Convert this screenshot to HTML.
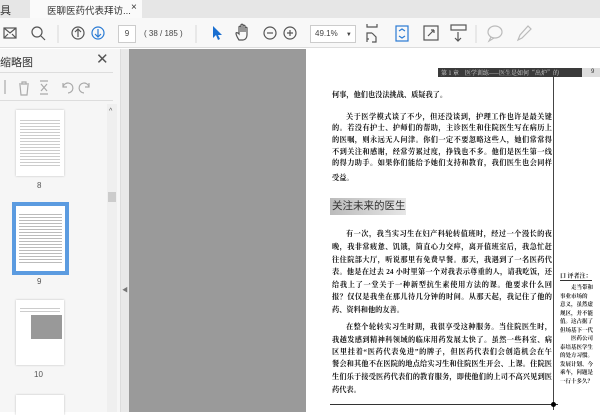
<!DOCTYPE html><html><head><meta charset="utf-8"><style>
*{margin:0;padding:0;box-sizing:border-box}
body{width:600px;height:412px;overflow:hidden;background:#fff;font-family:"Liberation Sans","Noto Sans CJK SC",sans-serif;position:relative}
.a{position:absolute}
.tx{font-family:"Liberation Serif","Noto Serif CJK SC",serif;font-size:7.2px;color:#111;white-space:nowrap;text-align:justify;text-align-last:justify;line-height:10px;font-weight:bold;overflow:hidden}
.sd{font-family:"Noto Serif CJK SC",serif;font-size:5.5px;color:#222;white-space:nowrap;line-height:8.5px;font-weight:bold}
svg{position:absolute}
</style></head><body>
<div class="a" style="left:0;top:0;width:600px;height:18px;background:#e6e6e6"></div>
<div class="a" style="left:0;top:2px;font-size:11px;color:#333">具</div>
<div class="a" style="left:30px;top:0;width:112px;height:19px;background:#fafafa"></div>
<div class="a" style="left:47px;top:3px;font-size:9.5px;color:#333">医聊医药代表拜访...</div>
<div class="a" style="left:131px;top:2px;font-size:10px;color:#333">×</div>
<div class="a" style="left:0;top:18px;width:600px;height:30px;background:#f8f8f8;border-bottom:1px solid #ddd"></div>
<svg style="left:0;top:22px" width="600" height="24" fill="none" stroke="#555" stroke-width="1.2">
<rect x="4" y="6" width="12" height="10"/><path d="M4 6l6 5 6-5M4 16l4-4M16 16l-4-4"/>
<circle cx="37" cy="10" r="5"/><path d="M41 14l4 4"/>
<path d="M58 3v18" stroke="#ddd"/>
<circle cx="78" cy="11" r="6"/><path d="M78 15V7M75 10l3-3 3 3"/>
<circle cx="98" cy="11" r="6" stroke="#2a7bd4"/><path d="M98 7v8M95 12l3 3 3-3" stroke="#2a7bd4"/>
<path d="M196 3v18" stroke="#ddd"/>
<path d="M213 4v12l3-3 2 5 2-1-2-4h4z" fill="#1a6fd0" stroke="none"/>
<path d="M239 18c-2-3-3-5-3-7 1-1 2 0 3 1V5c0-1 2-1 2 0v5V3c0-1 2-1 2 0v7V4c0-1 2-1 2 0v6V6c0-1 2-1 2 0v7c0 3-2 5-4 5z"/>
<circle cx="270" cy="11" r="6"/><path d="M267 11h6"/>
<circle cx="290" cy="11" r="6"/><path d="M287 11h6M290 8v6"/>
<path d="M367 2v3h10V2M367 20v-3h2M372 11h-5v9M372 11l4 4v5h-4" />
<rect x="396" y="4" width="12" height="15" stroke="#2a7bd4"/><path d="M399 9l3-2 3 2M399 14l3 2 3-2" stroke="#2a7bd4"/>
<rect x="424" y="4" width="14" height="14"/><path d="M428 14l6-6M434 8h-3M434 8v3"/>
<rect x="451" y="3" width="15" height="5"/><path d="M458 10v9M455 16l3 3 3-3"/>
<path d="M476 3v18" stroke="#ddd"/>
<ellipse cx="495" cy="10" rx="7" ry="6" stroke="#bbb"/><path d="M491 15l-2 4 5-3" stroke="#bbb"/>
<path d="M518 18l2-5 8-9 3 3-9 9z" stroke="#bbb"/>
</svg>
<div class="a" style="left:118px;top:25px;width:18px;height:18px;background:#fff;border:1px solid #ccc;font-size:8px;color:#444;text-align:center;line-height:16px">9</div>
<div class="a" style="left:144px;top:29px;font-size:8px;color:#444">( 38 / 185 )</div>
<div class="a" style="left:310px;top:25px;width:46px;height:18px;background:#fff;border:1px solid #ccc;font-size:8px;color:#444;line-height:16px;padding-left:4px">49.1% <span style="font-size:6px;margin-left:6px">▼</span></div>
<div class="a" style="left:0;top:49px;width:120px;height:363px;background:#f6f6f6"></div>
<div class="a" style="left:120px;top:49px;width:9px;height:363px;background:#e9e9e9;border-left:1px solid #ddd"></div>
<div class="a" style="left:122px;top:285px;font-size:6px;color:#777">◀</div>
<div class="a" style="left:0;top:54px;font-size:11px;color:#333">缩略图</div>
<div class="a" style="left:96px;top:50px;font-size:15px;color:#555">✕</div>
<div class="a" style="left:0;top:72px;width:113px;height:1px;background:#ddd"></div>
<div class="a" style="left:0;top:100px;width:113px;height:1px;background:#ddd"></div>
<svg style="left:0;top:78px" width="113" height="20" fill="none" stroke="#aaa" stroke-width="1.2">
<path d="M5 2v14"/><path d="M19 6h10M22 6V4h4v2M20 7l1 10h6l1-10"/>
<path d="M40 3h8M40 16h8M41 6l6 7M47 6l-6 7"/>
<path d="M68 15a5 5 0 1 0-5-6M63 5v4h4"/><path d="M84 15a5 5 0 1 1 5-6M89 5v4h-4"/>
</svg>
<div class="a" style="left:107px;top:104px;width:10px;height:308px;background:#efefef"></div>
<div class="a" style="left:108px;top:192px;width:8px;height:10px;background:#ccc"></div>
<div class="a" style="left:109px;top:108px;font-size:7px;color:#555">^</div>
<div class="a" style="left:16px;top:110px;width:48px;height:66px;background:#fff;box-shadow:0 0 2px #bbb"></div>
<div class="a" style="left:20px;top:118px;width:40px;height:50px;background:repeating-linear-gradient(#fff 0 2px,#ccc 2px 3px)"></div>
<div class="a" style="left:37px;top:181px;font-size:8px;color:#555">8</div>
<div class="a" style="left:12px;top:202px;width:57px;height:73px;background:#5b9be0"></div>
<div class="a" style="left:16px;top:206px;width:49px;height:65px;background:#fff"></div>
<div class="a" style="left:19px;top:212px;width:43px;height:52px;background:repeating-linear-gradient(#fff 0 2px,#bbb 2px 3px)"></div>
<div class="a" style="left:37px;top:277px;font-size:8px;color:#555">9</div>
<div class="a" style="left:16px;top:300px;width:48px;height:65px;background:#fff;box-shadow:0 0 2px #bbb"></div>
<div class="a" style="left:31px;top:315px;width:31px;height:24px;background:#999"></div>
<div class="a" style="left:20px;top:306px;width:40px;height:8px;background:repeating-linear-gradient(#fff 0 2px,#ccc 2px 3px)"></div>
<div class="a" style="left:34px;top:370px;font-size:8px;color:#555">10</div>
<div class="a" style="left:16px;top:395px;width:48px;height:20px;background:#fff;box-shadow:0 0 2px #bbb"></div>
<div class="a" style="left:129px;top:49px;width:177px;height:363px;background:#9a9a9a"></div>
<div class="a" style="left:306px;top:49px;width:294px;height:363px;background:#fff"></div>
<div class="a" style="left:438px;top:68px;width:144px;height:9px;background:#3a3a3a;color:#ddd;font-size:6px;line-height:9px;padding-left:3px;font-family:'Noto Serif CJK SC',serif;overflow:hidden;white-space:nowrap">第 1 章　医学训练——医生是如何“出炉”的</div>
<div class="a" style="left:582px;top:68px;width:18px;height:9px;background:#ddd;font-size:6px;color:#333;line-height:9px;padding-left:9px">9</div>
<div class="a" style="left:553px;top:77px;width:1px;height:333px;background:#444"></div>
<div class="a" style="left:330px;top:404px;width:228px;height:1px;background:#333"></div>
<div class="a" style="left:551px;top:402px;width:5px;height:5px;border-radius:50%;background:#000"></div>
<div class="a" style="left:330px;top:198px;width:76px;height:17px;background:linear-gradient(90deg,#bbb,#e6e6e6);font-size:10.5px;color:#333;line-height:17px;padding-left:2px">关注未来的医生</div>
<div class="tx a" style="left:332px;top:90px;text-align-last:left">何事，他们也没法挑战、质疑我了。</div>
<div class="tx a" style="left:346px;top:112px;width:206px">关于医学模式谈了不少，但还没谈到，护理工作也许是最关键</div>
<div class="tx a" style="left:332px;top:123px;width:220px">的。若没有护士、护师们的帮助，主诊医生和住院医生写在病历上</div>
<div class="tx a" style="left:332px;top:135px;width:220px">的医嘱，则永远无人问津。你们一定不要忽略这些人，她们常常得</div>
<div class="tx a" style="left:332px;top:147px;width:220px">不到关注和感谢，经常劳累过度，挣钱也不多。他们是医生第一线</div>
<div class="tx a" style="left:332px;top:158px;width:220px">的得力助手。如果你们能给予她们支持和教育，我们医生也会同样</div>
<div class="tx a" style="left:332px;top:173px;text-align-last:left">受益。</div>
<div class="tx a" style="left:346px;top:229px;width:206px">有一次，我当实习生在妇产科轮转值班时，经过一个漫长的夜</div>
<div class="tx a" style="left:332px;top:242px;width:220px">晚，我非常疲惫、饥饿，简直心力交瘁，离开值班室后，我急忙赶</div>
<div class="tx a" style="left:332px;top:255px;width:220px">往住院部大厅，听说那里有免费早餐。那天，我遇到了一名医药代</div>
<div class="tx a" style="left:332px;top:267px;width:220px">表。他是在过去 24 小时里第一个对我表示尊重的人，请我吃饭，还</div>
<div class="tx a" style="left:332px;top:280px;width:220px">给我上了一堂关于一种新型抗生素使用方法的课。他要求什么回</div>
<div class="tx a" style="left:332px;top:292px;width:220px">报？仅仅是我坐在那儿待几分钟的时间。从那天起，我记住了他的</div>
<div class="tx a" style="left:332px;top:305px;text-align-last:left">药、资料和他的友善。</div>
<div class="tx a" style="left:346px;top:322px;width:206px">在整个轮转实习生时期，我很享受这种服务。当住院医生时，</div>
<div class="tx a" style="left:332px;top:335px;width:220px">我越发感到精神科领域的临床用药发展太快了。虽然一些科室、病</div>
<div class="tx a" style="left:332px;top:347px;width:220px">区里挂着“医药代表免进”的牌子，但医药代表们会创造机会在午</div>
<div class="tx a" style="left:332px;top:359px;width:220px">餐会和其他不在医院的地点给实习生和住院医生开会、上课。住院医</div>
<div class="tx a" style="left:332px;top:372px;width:220px">生们乐于接受医药代表们的教育服务，即使他们的上司不高兴见到医</div>
<div class="tx a" style="left:332px;top:385px;text-align-last:left">药代表。</div>
<div class="a" style="left:560px;top:272px;font-size:6px;font-weight:bold;color:#111;border-bottom:1px solid #333;font-family:'Noto Serif CJK SC',serif;line-height:8px;white-space:nowrap">口 评者注：</div>
<div class="sd a" style="left:560px;top:283px">　　走当带和<br>事业市场的<br>意义，虽然虚<br>规区，并不能<br>值。这占据了<br>但场基下一代<br>　　医药公司<br>泰培基医学生<br>的处方习惯。<br>发展计划、今<br>乘车，问题是<br>一行十多久？</div>
</body></html>
